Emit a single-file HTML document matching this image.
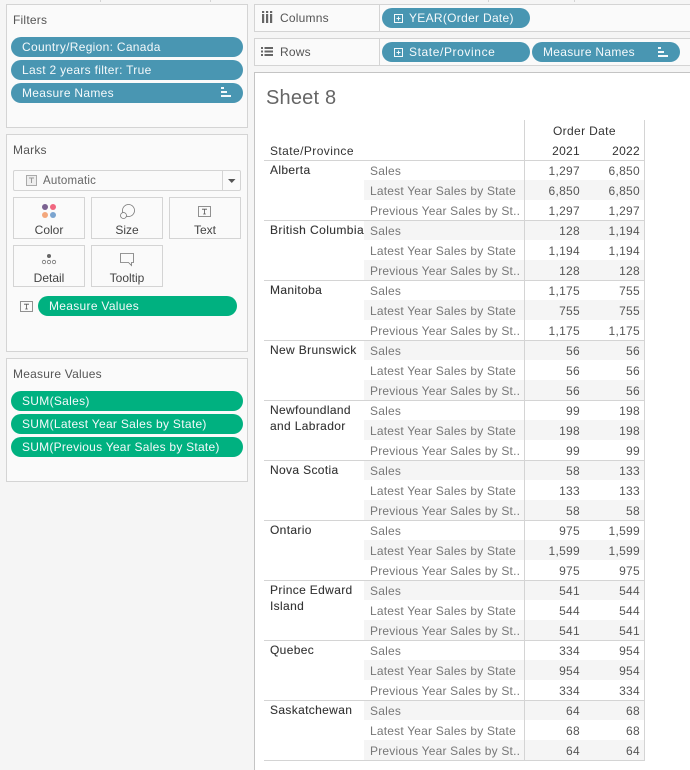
<!DOCTYPE html>
<html><head><meta charset="utf-8">
<style>
html,body{margin:0;padding:0}
body{width:690px;height:770px;position:relative;overflow:hidden;background:#f5f5f5;font-family:"Liberation Sans",sans-serif;font-size:12px;color:#555;letter-spacing:.22px}
.a,.box,.pill,.r,.r span,.l{position:absolute}
.a{white-space:nowrap}
.box{background:#fafafa;border:1px solid #d4d4d4;box-sizing:border-box}
.pill{height:20px;line-height:20px;border-radius:10px;color:#f4f9fb;white-space:nowrap;padding-left:11px;box-sizing:border-box;background:#4996b2;letter-spacing:.3px}
.g{background:#00b180}
.btn{position:absolute;background:#fafafa;border:1px solid #d4d4d4;box-sizing:border-box;width:72px;height:42px;text-align:center;line-height:64px;font-size:12px;color:#444;letter-spacing:0}
.l{background:#d4d4d4}
.r{left:264px;width:381px;height:20px;line-height:23px}
.r.s::before{content:"";position:absolute;left:100px;right:0;top:0;bottom:0;background:#f5f5f5}
.r span{top:0;white-space:nowrap}
.m{left:106px;color:#777;letter-spacing:.2px}
.v1{right:65px;color:#555;letter-spacing:.3px}
.v2{right:5px;color:#555;letter-spacing:.3px}
.st{position:absolute;left:270px;color:#333;line-height:16px;white-space:nowrap;letter-spacing:.35px;-webkit-text-stroke:.1px #333}
svg{position:absolute;overflow:visible}
</style></head><body>

<div class="l" style="left:100px;top:0;width:1px;height:2px"></div>
<div class="l" style="left:210px;top:0;width:1px;height:2px"></div>
<div class="l" style="left:488px;top:0;width:1px;height:2px"></div>
<div class="l" style="left:574px;top:0;width:1px;height:2px"></div>

<div class="box" style="left:6px;top:4px;width:242px;height:124px"></div>
<div class="a" style="left:13px;top:13px;color:#555">Filters</div>
<div class="pill" style="left:11px;top:37px;width:232px">Country/Region: Canada</div>
<div class="pill" style="left:11px;top:60px;width:232px">Last 2 years filter: True</div>
<div class="pill" style="left:11px;top:83px;width:232px">Measure Names</div>
<svg style="left:221px;top:87px" width="10" height="11" fill="#f4f9fb"><rect x="0" y="0" width="3" height="2"/><rect x="0" y="4" width="6" height="2"/><rect x="0" y="8" width="10" height="2"/></svg>

<div class="box" style="left:6px;top:134px;width:242px;height:218px"></div>
<div class="a" style="left:13px;top:143px;color:#555">Marks</div>
<div class="a" style="left:13px;top:170px;width:228px;height:21px;background:#fafafa;border:1px solid #d4d4d4;box-sizing:border-box;border-radius:2px"></div>
<div class="l" style="left:222px;top:171px;width:1px;height:19px"></div>
<svg style="left:26px;top:175px" width="11" height="11"><rect x=".5" y=".5" width="10" height="10" fill="#eee" stroke="#aaa"/><path d="M3 3h5M5.5 3v5" stroke="#999" fill="none"/></svg>
<div class="a" style="left:43px;top:175px;color:#666;font-size:11.5px;line-height:13px">Automatic</div>
<svg style="left:228px;top:179px" width="8" height="4"><path d="M0 0h7.5L3.75 4z" fill="#555"/></svg>

<div class="btn" style="left:13px;top:197px">Color</div>
<div class="btn" style="left:91px;top:197px">Size</div>
<div class="btn" style="left:169px;top:197px">Text</div>
<div class="btn" style="left:13px;top:245px">Detail</div>
<div class="btn" style="left:91px;top:245px">Tooltip</div>
<svg style="left:42px;top:204px" width="14" height="14"><circle cx="3" cy="3" r="3" fill="#7b6291"/><circle cx="11" cy="3" r="3" fill="#f0667f"/><circle cx="3" cy="11" r="3" fill="#f3a77c"/><circle cx="11" cy="11" r="3" fill="#7ba4cf"/></svg>
<svg style="left:120px;top:204px" width="15" height="15" fill="none" stroke="#777" stroke-width=".8"><circle cx="8.5" cy="6.5" r="6"/><circle cx="3.5" cy="11.5" r="3" fill="#fafafa"/></svg>
<svg style="left:198px;top:206px" width="13" height="11" fill="none" stroke="#777" stroke-width=".8"><rect x=".5" y=".5" width="12" height="10"/><path d="M4 3.2h5M6.5 3.2v5M5.2 8h2.6" stroke="#555"/></svg>
<svg style="left:42px;top:254px" width="14" height="14" fill="none" stroke="#777" stroke-width=".8"><circle cx="7" cy="2" r="2" fill="#666" stroke="none"/><circle cx="2" cy="8" r="1.7"/><circle cx="7" cy="8" r="1.7"/><circle cx="12" cy="8" r="1.7"/></svg>
<svg style="left:120px;top:253px" width="14" height="13" fill="none" stroke="#777" stroke-width=".8"><path d="M.5.5h13v9h-2v3l-3-3H.5z"/></svg>

<svg style="left:20px;top:301px" width="13" height="11" fill="none" stroke="#777" stroke-width=".8"><rect x=".5" y=".5" width="12" height="10"/><path d="M4 3.2h5M6.5 3.2v5M5.2 8h2.6" stroke="#555"/></svg>
<div class="pill g" style="left:38px;top:296px;width:199px">Measure Values</div>

<div class="box" style="left:6px;top:358px;width:242px;height:124px"></div>
<div class="a" style="left:13px;top:367px;color:#555">Measure Values</div>
<div class="pill g" style="left:11px;top:391px;width:232px">SUM(Sales)</div>
<div class="pill g" style="left:11px;top:414px;width:232px">SUM(Latest Year Sales by State)</div>
<div class="pill g" style="left:11px;top:437px;width:232px;letter-spacing:.25px">SUM(Previous Year Sales by State)</div>

<div class="box" style="left:254px;top:4px;width:440px;height:28px"></div>
<div class="l" style="left:379px;top:5px;width:1px;height:26px"></div>
<svg style="left:262px;top:11px" width="10" height="12" fill="#666"><rect x="0" y="3" width="2.2" height="9"/><rect x="4" y="3" width="2.2" height="9"/><rect x="8" y="3" width="2.2" height="9"/><rect x="0" y="0" width="2.2" height="2"/><rect x="4" y="0" width="2.2" height="2"/><rect x="8" y="0" width="2.2" height="2"/></svg>
<div class="a" style="left:280px;top:11px;color:#555">Columns</div>
<div class="pill" style="left:382px;top:8px;width:148px;padding-left:27px">YEAR(Order Date)</div>

<div class="box" style="left:254px;top:38px;width:440px;height:28px"></div>
<div class="l" style="left:379px;top:39px;width:1px;height:26px"></div>
<svg style="left:261px;top:47px" width="12" height="9" fill="#666"><rect x="0" y="0" width="2" height="2"/><rect x="3.5" y="0" width="8.5" height="2"/><rect x="0" y="3.5" width="2" height="2"/><rect x="3.5" y="3.5" width="8.5" height="2"/><rect x="0" y="7" width="2" height="2"/><rect x="3.5" y="7" width="8.5" height="2"/></svg>
<div class="a" style="left:280px;top:45px;color:#555">Rows</div>
<div class="pill" style="left:382px;top:42px;width:148px;padding-left:27px;letter-spacing:.6px">State/Province</div>
<div class="pill" style="left:532px;top:42px;width:148px">Measure Names</div>
<svg style="left:658px;top:47px" width="10" height="10" fill="#f4f9fb"><rect x="0" y="0" width="3" height="2"/><rect x="0" y="4" width="6" height="2"/><rect x="0" y="8" width="10" height="2"/></svg>
<svg style="left:394px;top:14px" width="10" height="10" fill="none" stroke="#f4f9fb"><rect x=".5" y=".5" width="8" height="8"/><path d="M2.5 4.5h4M4.5 2.5v4"/></svg>
<svg style="left:394px;top:48px" width="10" height="10" fill="none" stroke="#f4f9fb"><rect x=".5" y=".5" width="8" height="8"/><path d="M2.5 4.5h4M4.5 2.5v4"/></svg>

<div class="a" style="left:254px;top:72px;width:436px;height:698px;background:#fff;border:1px solid #c4c4c4;border-right:0;border-bottom:0;box-sizing:border-box"></div>
<div class="a" style="left:266px;top:87px;font-size:20px;color:#666;letter-spacing:.2px;line-height:23px">Sheet 8</div>

<div class="a" style="left:553px;top:124px;color:#333;letter-spacing:.35px">Order Date</div>
<div class="a" style="left:270px;top:144px;color:#333;letter-spacing:.42px">State/Province</div>
<div class="a" style="right:110px;top:144px;color:#333;letter-spacing:.3px">2021</div>
<div class="a" style="right:50px;top:144px;color:#333;letter-spacing:.3px">2022</div>

<div class="r"   style="top:160px"><span class="m">Sales</span><span class="v1">1,297</span><span class="v2">6,850</span></div>
<div class="r s" style="top:180px"><span class="m">Latest Year Sales by State</span><span class="v1">6,850</span><span class="v2">6,850</span></div>
<div class="r"   style="top:200px"><span class="m">Previous Year Sales by St..</span><span class="v1">1,297</span><span class="v2">1,297</span></div>
<div class="r s" style="top:220px"><span class="m">Sales</span><span class="v1">128</span><span class="v2">1,194</span></div>
<div class="r"   style="top:240px"><span class="m">Latest Year Sales by State</span><span class="v1">1,194</span><span class="v2">1,194</span></div>
<div class="r s" style="top:260px"><span class="m">Previous Year Sales by St..</span><span class="v1">128</span><span class="v2">128</span></div>
<div class="r"   style="top:280px"><span class="m">Sales</span><span class="v1">1,175</span><span class="v2">755</span></div>
<div class="r s" style="top:300px"><span class="m">Latest Year Sales by State</span><span class="v1">755</span><span class="v2">755</span></div>
<div class="r"   style="top:320px"><span class="m">Previous Year Sales by St..</span><span class="v1">1,175</span><span class="v2">1,175</span></div>
<div class="r s" style="top:340px"><span class="m">Sales</span><span class="v1">56</span><span class="v2">56</span></div>
<div class="r"   style="top:360px"><span class="m">Latest Year Sales by State</span><span class="v1">56</span><span class="v2">56</span></div>
<div class="r s" style="top:380px"><span class="m">Previous Year Sales by St..</span><span class="v1">56</span><span class="v2">56</span></div>
<div class="r"   style="top:400px"><span class="m">Sales</span><span class="v1">99</span><span class="v2">198</span></div>
<div class="r s" style="top:420px"><span class="m">Latest Year Sales by State</span><span class="v1">198</span><span class="v2">198</span></div>
<div class="r"   style="top:440px"><span class="m">Previous Year Sales by St..</span><span class="v1">99</span><span class="v2">99</span></div>
<div class="r s" style="top:460px"><span class="m">Sales</span><span class="v1">58</span><span class="v2">133</span></div>
<div class="r"   style="top:480px"><span class="m">Latest Year Sales by State</span><span class="v1">133</span><span class="v2">133</span></div>
<div class="r s" style="top:500px"><span class="m">Previous Year Sales by St..</span><span class="v1">58</span><span class="v2">58</span></div>
<div class="r"   style="top:520px"><span class="m">Sales</span><span class="v1">975</span><span class="v2">1,599</span></div>
<div class="r s" style="top:540px"><span class="m">Latest Year Sales by State</span><span class="v1">1,599</span><span class="v2">1,599</span></div>
<div class="r"   style="top:560px"><span class="m">Previous Year Sales by St..</span><span class="v1">975</span><span class="v2">975</span></div>
<div class="r s" style="top:580px"><span class="m">Sales</span><span class="v1">541</span><span class="v2">544</span></div>
<div class="r"   style="top:600px"><span class="m">Latest Year Sales by State</span><span class="v1">544</span><span class="v2">544</span></div>
<div class="r s" style="top:620px"><span class="m">Previous Year Sales by St..</span><span class="v1">541</span><span class="v2">541</span></div>
<div class="r"   style="top:640px"><span class="m">Sales</span><span class="v1">334</span><span class="v2">954</span></div>
<div class="r s" style="top:660px"><span class="m">Latest Year Sales by State</span><span class="v1">954</span><span class="v2">954</span></div>
<div class="r"   style="top:680px"><span class="m">Previous Year Sales by St..</span><span class="v1">334</span><span class="v2">334</span></div>
<div class="r s" style="top:700px"><span class="m">Sales</span><span class="v1">64</span><span class="v2">68</span></div>
<div class="r"   style="top:720px"><span class="m">Latest Year Sales by State</span><span class="v1">68</span><span class="v2">68</span></div>
<div class="r s" style="top:740px"><span class="m">Previous Year Sales by St..</span><span class="v1">64</span><span class="v2">64</span></div>

<div class="st" style="top:162px">Alberta</div>
<div class="st" style="top:222px;letter-spacing:.42px">British Columbia</div>
<div class="st" style="top:282px">Manitoba</div>
<div class="st" style="top:342px">New Brunswick</div>
<div class="st" style="top:402px">Newfoundland<br>and Labrador</div>
<div class="st" style="top:462px">Nova Scotia</div>
<div class="st" style="top:522px">Ontario</div>
<div class="st" style="top:582px">Prince Edward<br>Island</div>
<div class="st" style="top:642px">Quebec</div>
<div class="st" style="top:702px">Saskatchewan</div>

<div class="l" style="left:264px;top:160px;width:381px;height:1px"></div>
<div class="l" style="left:264px;top:220px;width:381px;height:1px"></div>
<div class="l" style="left:264px;top:280px;width:381px;height:1px"></div>
<div class="l" style="left:264px;top:340px;width:381px;height:1px"></div>
<div class="l" style="left:264px;top:400px;width:381px;height:1px"></div>
<div class="l" style="left:264px;top:460px;width:381px;height:1px"></div>
<div class="l" style="left:264px;top:520px;width:381px;height:1px"></div>
<div class="l" style="left:264px;top:580px;width:381px;height:1px"></div>
<div class="l" style="left:264px;top:640px;width:381px;height:1px"></div>
<div class="l" style="left:264px;top:700px;width:381px;height:1px"></div>
<div class="l" style="left:264px;top:760px;width:381px;height:1px"></div>
<div class="l" style="left:524px;top:120px;width:1px;height:641px"></div>
<div class="l" style="left:644px;top:120px;width:1px;height:641px"></div>
</body></html>
